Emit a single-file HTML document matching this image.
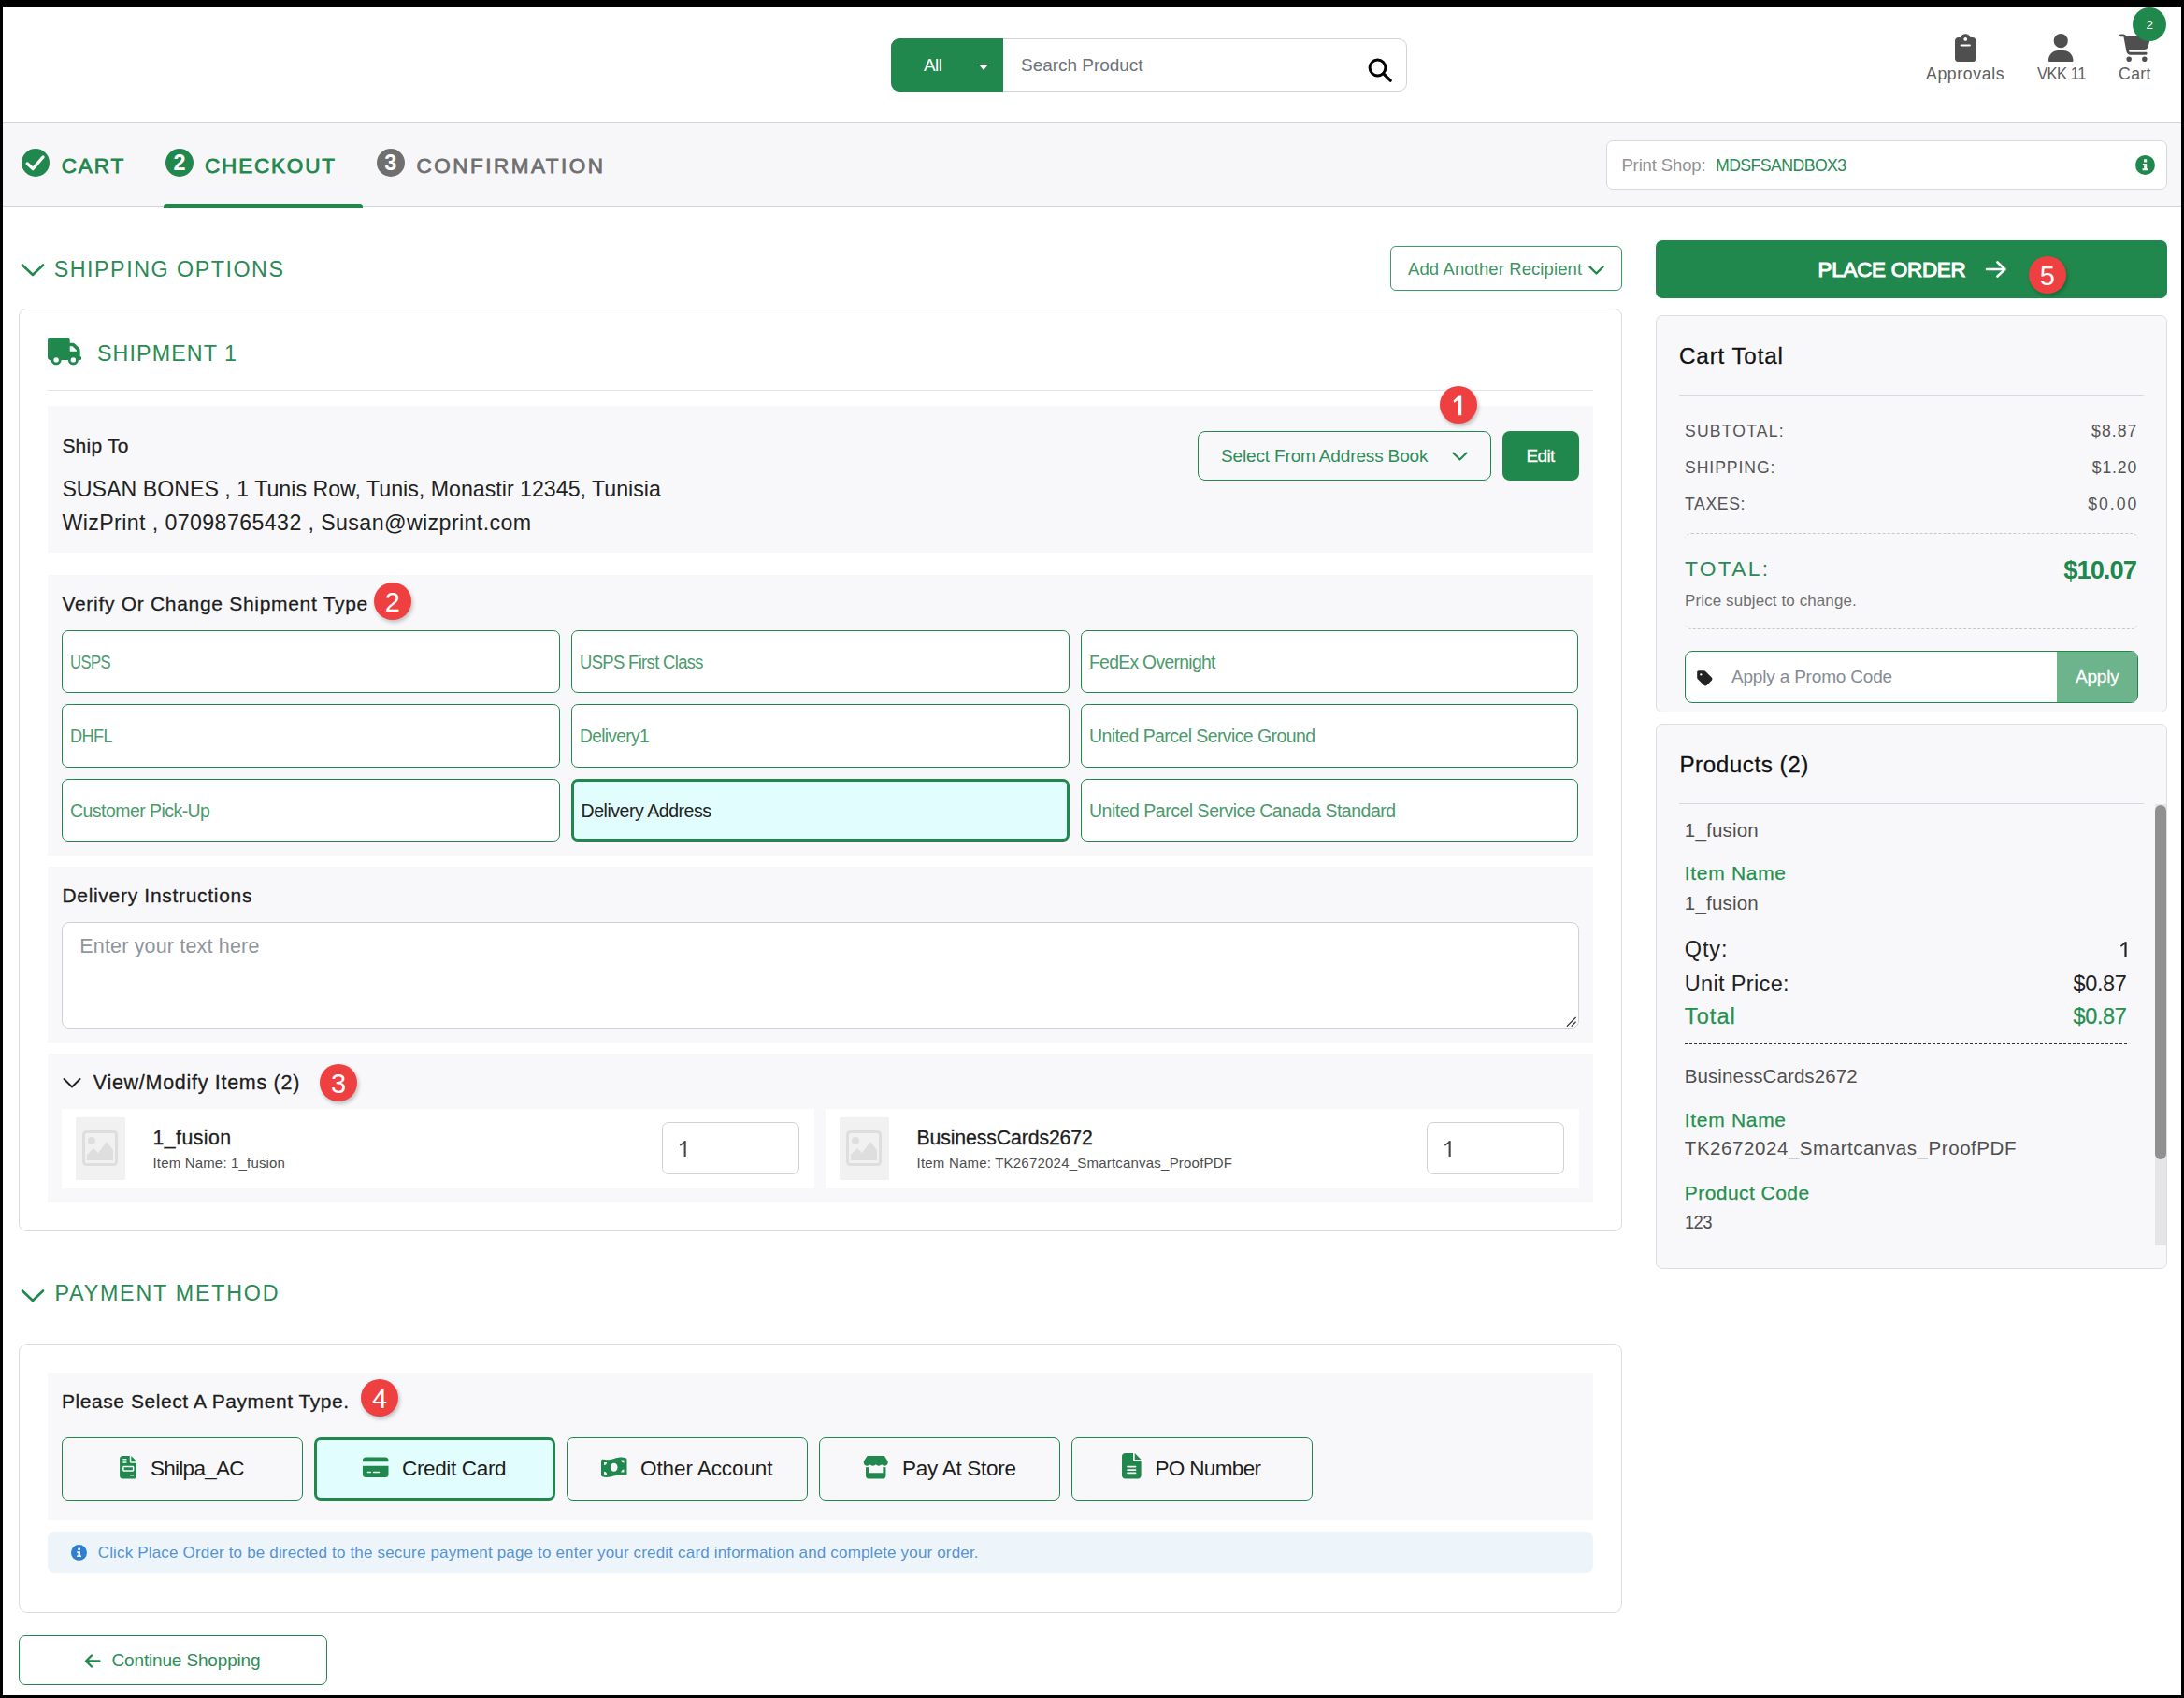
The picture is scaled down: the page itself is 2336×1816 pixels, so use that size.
<!DOCTYPE html>
<html lang="en">
<head>
<meta charset="utf-8">
<title>Checkout</title>
<style>
html,body{margin:0;padding:0;}
body{width:2336px;height:1816px;background:#000;position:relative;overflow:hidden;font-family:"Liberation Sans",sans-serif;}
#page{position:absolute;left:3px;top:7px;width:2330px;height:1806px;background:#fff;overflow:hidden;}
#abs{position:absolute;left:-3px;top:-7px;width:2336px;height:1816px;}
.b{position:absolute;box-sizing:border-box;display:block;}
.t{position:absolute;white-space:nowrap;line-height:1;transform-origin:0 50%;font-family:"Liberation Sans",sans-serif;}
.red{position:absolute;border-radius:50%;background:#ee4041;color:#fff;text-align:center;font-size:29px;box-shadow:1.5px 2.5px 4px rgba(0,0,0,.24);font-family:"Liberation Sans",sans-serif;}
</style>
</head>
<body>
<div id="page"><div id="abs">
<div class="b" style="left:3.0px;top:131.0px;width:2330.0px;height:1.0px;background:#cfd5dc;"></div>
<div class="b" style="left:953.0px;top:41.0px;width:552.0px;height:57.0px;background:#fff;border:1.5px solid #cfd4da;border-radius:9px;"></div>
<div class="b" style="left:953.0px;top:41.0px;width:120.0px;height:57.0px;background:#21884d;border-radius:9px 0 0 9px;"></div>
<span class="t" style="left:988.0px;top:60.4px;font-size:19.0px;color:#fff;letter-spacing:-0.56px;">All</span>
<svg class="b" style="left:1047.0px;top:68.5px;" width="10.0" height="6.0" viewBox="0 0 10 6"><path d="M0 0H10L5 6Z" fill="#fff"/></svg>
<span class="t" style="left:1092.0px;top:60.4px;font-size:19.0px;color:#6d747c;letter-spacing:-0.03px;">Search Product</span>
<svg class="b" style="left:1463.2px;top:62.0px;" width="27.0" height="27.0" viewBox="0 0 27 27"><circle cx="10.500" cy="10.500" r="8.400" fill="none" stroke="#000" stroke-width="3"/><path d="M16.800 16.800L24.200 24.200" stroke="#000" stroke-width="3.300" stroke-linecap="round"/></svg>
<svg class="b" style="left:2091.0px;top:35.5px;" width="22.5" height="30.5" viewBox="0 0 384 512"><path fill="#4f4f4f" d="M192 0c-41.800 0-77.400 26.700-90.500 64H64C28.700 64 0 92.700 0 128V448c0 35.300 28.700 64 64 64H320c35.300 0 64-28.700 64-64V128c0-35.300-28.700-64-64-64H282.500C269.400 26.700 233.800 0 192 0zm0 64a32 32 0 1 1 0 64 32 32 0 1 1 0-64zM112 192H272c8.800 0 16 7.200 16 16s-7.200 16-16 16H112c-8.800 0-16-7.200-16-16s7.200-16 16-16z"/></svg>
<span class="t" style="left:2060.0px;top:71.1px;font-size:17.6px;color:#5e5e5e;letter-spacing:0.66px;">Approvals</span>
<svg class="b" style="left:2191.0px;top:35.5px;" width="26.5" height="30.5" viewBox="0 0 448 512"><path fill="#4f4f4f" d="M224 256A128 128 0 1 0 224 0a128 128 0 1 0 0 256zm-45.700 48C79.800 304 0 383.800 0 482.300C0 498.700 13.300 512 29.700 512H418.300c16.400 0 29.700-13.300 29.700-29.700C448 383.800 368.200 304 269.700 304H178.300z"/></svg>
<span class="t" style="left:2178.5px;top:71.1px;font-size:17.6px;color:#5e5e5e;letter-spacing:-0.62px;transform:scaleX(0.949);">VKK 11</span>
<svg class="b" style="left:2266.5px;top:35.5px;" width="33.3" height="30.5" viewBox="0 0 576 512"><path fill="#4f4f4f" d="M0 24C0 10.700 10.700 0 24 0H69.500c22 0 41.500 12.800 50.600 32h411c26.300 0 45.500 25 38.600 50.400l-41 152.300c-8.500 31.400-37 53.300-69.500 53.300H170.700l5.400 28.500c2.200 11.300 12.100 19.500 23.600 19.500H488c13.300 0 24 10.700 24 24s-10.700 24-24 24H199.700c-34.600 0-64.300-24.600-70.700-58.500L77.400 54.500c-.7-3.800-4-6.500-7.900-6.500H24C10.700 48 0 37.300 0 24zM128 464a48 48 0 1 1 96 0 48 48 0 1 1 -96 0zm336-48a48 48 0 1 1 0 96 48 48 0 1 1 0-96z"/></svg>
<span class="t" style="left:2266.0px;top:71.1px;font-size:17.6px;color:#5e5e5e;letter-spacing:0.42px;">Cart</span>
<div class="b" style="left:2281.0px;top:8.0px;width:36.0px;height:36.0px;background:#21884d;border-radius:18px;"></div>
<span class="t" style="left:2295.5px;top:19.6px;font-size:13.5px;color:#fff;">2</span>
<div class="b" style="left:3.0px;top:132.0px;width:2330.0px;height:88.0px;background:#f7f7f9;"></div>
<div class="b" style="left:3.0px;top:220.0px;width:2330.0px;height:1.0px;background:#cfd5dc;"></div>
<div class="b" style="left:175.0px;top:218.0px;width:213.0px;height:4.0px;background:#21884d;border-radius:3px 3px 0 0;"></div>
<svg class="b" style="left:23.0px;top:159.0px;" width="30.0" height="30.0" viewBox="0 0 30 30"><circle cx="15" cy="15" r="15" fill="#21884d"/><path d="M6.200 16L12.200 21.500L23 9" fill="none" stroke="#fff" stroke-width="3.400" stroke-linecap="round" stroke-linejoin="round"/></svg>
<span class="t" style="left:65.7px;top:167.4px;font-size:22.5px;color:#21884d;-webkit-text-stroke:0.80px #21884d;letter-spacing:1.89px;">CART</span>
<div class="b" style="left:177.2px;top:159.0px;width:30.0px;height:30.0px;background:#21884d;border-radius:15px;"></div>
<span class="t" style="left:185.5px;top:163.1px;font-size:23.5px;color:#fff;font-weight:700;">2</span>
<span class="t" style="left:219.0px;top:167.4px;font-size:22.5px;color:#21884d;-webkit-text-stroke:0.80px #21884d;letter-spacing:1.82px;">CHECKOUT</span>
<div class="b" style="left:402.8px;top:159.0px;width:30.0px;height:30.0px;background:#6f6f6f;border-radius:15px;"></div>
<span class="t" style="left:411.2px;top:163.1px;font-size:23.5px;color:#fff;font-weight:700;">3</span>
<span class="t" style="left:445.5px;top:167.4px;font-size:22.5px;color:#6f6f6f;-webkit-text-stroke:0.80px #6f6f6f;letter-spacing:2.49px;">CONFIRMATION</span>
<div class="b" style="left:1718.0px;top:150.0px;width:600.0px;height:52.5px;background:#fff;border:1.5px solid #d5dae0;border-radius:7px;"></div>
<span class="t" style="left:1734.4px;top:167.6px;font-size:18.5px;color:#939393;letter-spacing:-0.13px;">Print Shop:</span>
<span class="t" style="left:1834.8px;top:167.6px;font-size:18.5px;color:#2b8a55;letter-spacing:-0.65px;transform:scaleX(0.960);">MDSFSANDBOX3</span>
<svg class="b" style="left:2284.0px;top:165.5px;" width="21.0" height="21.0" viewBox="0 0 21 21"><circle cx="10.500" cy="10.500" r="10.500" fill="#21884d"/><rect x="9" y="4.300" width="3.200" height="3.200" rx="0.600" fill="#fff"/><path d="M7.800 9H12.200V14.200H13.600V16.200H7.600V14.200H9.200V11H7.800Z" fill="#fff"/></svg>
<svg class="b" style="left:22.0px;top:280.5px;" width="26.0" height="16.0" viewBox="0 0 26 16"><path d="M2 2.500L13 13L24 2.500" fill="none" stroke="#21884d" stroke-width="2.600" stroke-linecap="round" stroke-linejoin="round"/></svg>
<span class="t" style="left:57.7px;top:276.5px;font-size:23.3px;color:#2b8a55;letter-spacing:1.51px;">SHIPPING OPTIONS</span>
<div class="b" style="left:1487.0px;top:263.3px;width:248.0px;height:47.3px;background:#fff;border:1.5px solid #3d9a68;border-radius:6px;"></div>
<span class="t" style="left:1506.0px;top:279.3px;font-size:18.5px;color:#3f9463;letter-spacing:0.10px;">Add Another Recipient</span>
<svg class="b" style="left:1699.0px;top:283.5px;" width="17.0" height="10.0" viewBox="0 0 17 10"><path d="M1.500 1.500L8.500 8.500L15.500 1.500" fill="none" stroke="#21884d" stroke-width="2.400" stroke-linecap="round" stroke-linejoin="round"/></svg>
<div class="b" style="left:20.0px;top:330.0px;width:1715.0px;height:987.0px;background:#fff;border:1.5px solid #d8dde3;border-radius:8px;"></div>
<svg class="b" style="left:50.8px;top:361.3px;" width="36.5" height="29.5" viewBox="0 0 640 512"><path fill="#21884d" d="M48 0C21.500 0 0 21.500 0 48V368c0 26.500 21.500 48 48 48H64c0 53 43 96 96 96s96-43 96-96H384c0 53 43 96 96 96s96-43 96-96h32c17.700 0 32-14.300 32-32s-14.300-32-32-32V288 256 237.300c0-17-6.700-33.300-18.700-45.300L512 114.700c-12-12-28.300-18.700-45.300-18.700H416V48c0-26.500-21.500-48-48-48H48zM416 160h50.700L544 237.300V256H416V160zM112 416a48 48 0 1 1 96 0 48 48 0 1 1 -96 0zm368-48a48 48 0 1 1 0 96 48 48 0 1 1 0-96z"/></svg>
<span class="t" style="left:104.0px;top:367.3px;font-size:23.3px;color:#2b8a55;letter-spacing:1.07px;">SHIPMENT 1</span>
<div class="b" style="left:51.0px;top:417.0px;width:1653.0px;height:1.0px;background:#e2e3e5;"></div>
<div class="b" style="left:51.0px;top:434.0px;width:1653.0px;height:157.0px;background:#f8f8fa;"></div>
<span class="t" style="left:66.4px;top:465.9px;font-size:21.0px;color:#1d1d1d;-webkit-text-stroke:0.28px #1d1d1d;letter-spacing:0.22px;">Ship To</span>
<span class="t" style="left:66.4px;top:511.8px;font-size:23.2px;color:#222;">SUSAN BONES , 1 Tunis Row, Tunis, Monastir 12345, Tunisia</span>
<span class="t" style="left:66.4px;top:548.0px;font-size:23.2px;color:#222;letter-spacing:0.40px;">WizPrint , 07098765432 , Susan@wizprint.com</span>
<div class="b" style="left:1281.0px;top:461.0px;width:314.0px;height:53.0px;border:1.5px solid #21884d;border-radius:8px;"></div>
<span class="t" style="left:1306.0px;top:477.9px;font-size:19.0px;color:#2f8d58;letter-spacing:-0.15px;">Select From Address Book</span>
<svg class="b" style="left:1552.5px;top:483.3px;" width="17.0" height="10.5" viewBox="0 0 18 11"><path d="M1.500 1.500L9 9L16.500 1.500" fill="none" stroke="#21884d" stroke-width="2.100" stroke-linecap="round" stroke-linejoin="round"/></svg>
<div class="b" style="left:1607.0px;top:461.0px;width:82.0px;height:53.0px;background:#21884d;border-radius:8px;"></div>
<span class="t" style="left:1632.4px;top:478.2px;font-size:19.0px;color:#fff;-webkit-text-stroke:0.28px #fff;letter-spacing:-0.58px;">Edit</span>
<div class="red" style="left:1539.8px;top:413.0px;width:40px;height:40px;line-height:42px;"><svg width="40" height="40" viewBox="-20 -20 40 40" style="display:block"><path d="M0.800 -10.450H3.200V11.200H-0.100V-5.600L-4.600 -1.900L-5.400 -4.500Z" fill="#fff"/></svg></div>
<div class="b" style="left:51.0px;top:615.0px;width:1653.0px;height:300.0px;background:#f8f8fa;"></div>
<span class="t" style="left:66.4px;top:635.4px;font-size:21.0px;color:#1d1d1d;-webkit-text-stroke:0.28px #1d1d1d;letter-spacing:0.70px;">Verify Or Change Shipment Type</span>
<div class="red" style="left:399.8px;top:623.3px;width:40px;height:40px;line-height:42px;">2</div>
<div class="b" style="left:66.0px;top:674.0px;width:533.0px;height:67.0px;background:#fff;border:1.5px solid #21884d;border-radius:7px;"></div>
<span class="t" style="left:75.0px;top:698.5px;font-size:19.5px;color:#4c9a6d;letter-spacing:-0.68px;transform:scaleX(0.852);">USPS</span>
<div class="b" style="left:611.0px;top:674.0px;width:533.0px;height:67.0px;background:#fff;border:1.5px solid #21884d;border-radius:7px;"></div>
<span class="t" style="left:620.0px;top:698.5px;font-size:19.5px;color:#4c9a6d;letter-spacing:-0.68px;transform:scaleX(0.944);">USPS First Class</span>
<div class="b" style="left:1156.0px;top:674.0px;width:532.0px;height:67.0px;background:#fff;border:1.5px solid #21884d;border-radius:7px;"></div>
<span class="t" style="left:1165.0px;top:698.5px;font-size:19.5px;color:#4c9a6d;letter-spacing:-0.68px;transform:scaleX(0.990);">FedEx Overnight</span>
<div class="b" style="left:66.0px;top:753.0px;width:533.0px;height:68.0px;background:#fff;border:1.5px solid #21884d;border-radius:7px;"></div>
<span class="t" style="left:75.0px;top:778.0px;font-size:19.5px;color:#4c9a6d;letter-spacing:-0.68px;transform:scaleX(0.931);">DHFL</span>
<div class="b" style="left:611.0px;top:753.0px;width:533.0px;height:68.0px;background:#fff;border:1.5px solid #21884d;border-radius:7px;"></div>
<span class="t" style="left:620.0px;top:778.0px;font-size:19.5px;color:#4c9a6d;letter-spacing:-0.68px;transform:scaleX(0.983);">Delivery1</span>
<div class="b" style="left:1156.0px;top:753.0px;width:532.0px;height:68.0px;background:#fff;border:1.5px solid #21884d;border-radius:7px;"></div>
<span class="t" style="left:1165.0px;top:778.0px;font-size:19.5px;color:#4c9a6d;letter-spacing:-0.59px;">United Parcel Service Ground</span>
<div class="b" style="left:66.0px;top:833.0px;width:533.0px;height:67.0px;background:#fff;border:1.5px solid #21884d;border-radius:7px;"></div>
<span class="t" style="left:75.0px;top:857.5px;font-size:19.5px;color:#4c9a6d;letter-spacing:-0.55px;">Customer Pick-Up</span>
<div class="b" style="left:611.0px;top:833.0px;width:533.0px;height:67.0px;background:#e1fdfd;border:3.5px solid #21884d;border-radius:7px;"></div>
<span class="t" style="left:621.5px;top:857.5px;font-size:19.5px;color:#222;letter-spacing:-0.45px;">Delivery Address</span>
<div class="b" style="left:1156.0px;top:833.0px;width:532.0px;height:67.0px;background:#fff;border:1.5px solid #21884d;border-radius:7px;"></div>
<span class="t" style="left:1165.0px;top:857.5px;font-size:19.5px;color:#4c9a6d;letter-spacing:-0.49px;">United Parcel Service Canada Standard</span>
<div class="b" style="left:51.0px;top:927.0px;width:1653.0px;height:188.0px;background:#f8f8fa;"></div>
<span class="t" style="left:66.4px;top:947.2px;font-size:21.0px;color:#1d1d1d;-webkit-text-stroke:0.28px #1d1d1d;letter-spacing:0.70px;">Delivery Instructions</span>
<div class="b" style="left:66.0px;top:986.0px;width:1623.0px;height:114.0px;background:#fff;border:1.5px solid #cdd2d9;border-radius:8px;"></div>
<span class="t" style="left:85.3px;top:1002.0px;font-size:21.5px;color:#90959d;letter-spacing:0.17px;">Enter your text here</span>
<svg class="b" style="left:1674.5px;top:1086.5px;" width="11.5" height="11.5" viewBox="0 0 13 13"><path d="M1 12L12 1M6.500 12L12 6.500" stroke="#333" stroke-width="1.500" fill="none"/></svg>
<div class="b" style="left:51.0px;top:1127.0px;width:1653.0px;height:159.0px;background:#f8f8fa;"></div>
<svg class="b" style="left:67.0px;top:1152.0px;" width="20.0" height="13.0" viewBox="0 0 20 13"><path d="M1.500 2L10 10.500L18.500 2" fill="none" stroke="#222" stroke-width="2" stroke-linecap="round" stroke-linejoin="round"/></svg>
<span class="t" style="left:99.8px;top:1147.6px;font-size:21.5px;color:#1d1d1d;-webkit-text-stroke:0.28px #1d1d1d;letter-spacing:0.71px;">View/Modify Items (2)</span>
<div class="red" style="left:342.0px;top:1138.0px;width:40px;height:40px;line-height:42px;">3</div>
<div class="b" style="left:66.0px;top:1186.0px;width:805.0px;height:85.0px;background:#fff;"></div>
<div class="b" style="left:81.0px;top:1195.0px;width:53.0px;height:67.0px;background:#f1f1f1;"></div>
<svg class="b" style="left:86.8px;top:1207.8px;" width="40.0" height="40.0" viewBox="0 0 40 40"><rect x="2.500" y="2.500" width="35" height="35" rx="3" fill="none" stroke="#dedede" stroke-width="3"/><circle cx="11" cy="12" r="4" fill="#dedede"/><path d="M6 33V27L13 20L18 25L27 13L34 22V33Z" fill="#dedede"/></svg>
<span class="t" style="left:163.5px;top:1206.6px;font-size:21.3px;color:#1d1d1d;-webkit-text-stroke:0.28px #1d1d1d;letter-spacing:0.43px;">1_fusion</span>
<span class="t" style="left:163.5px;top:1235.6px;font-size:15.0px;color:#4d4d4d;letter-spacing:0.17px;">Item Name: 1_fusion</span>
<div class="b" style="left:707.6px;top:1200.2px;width:147.9px;height:55.6px;background:#fff;border:1.5px solid #cdd2d9;border-radius:7px;"></div>
<svg class="b" style="left:727.2px;top:1219.8px;" width="6.7" height="17.4" viewBox="0 0 6.70 17.40"><path d="M5.65 0.30V17.40" fill="none" stroke="#444" stroke-width="2.10"/><path d="M0.94 4.70L5.55 1.04" fill="none" stroke="#444" stroke-width="1.68" stroke-linecap="round"/></svg>
<div class="b" style="left:883.0px;top:1186.0px;width:806.0px;height:85.0px;background:#fff;"></div>
<div class="b" style="left:898.0px;top:1195.0px;width:53.0px;height:67.0px;background:#f1f1f1;"></div>
<svg class="b" style="left:903.8px;top:1207.8px;" width="40.0" height="40.0" viewBox="0 0 40 40"><rect x="2.500" y="2.500" width="35" height="35" rx="3" fill="none" stroke="#dedede" stroke-width="3"/><circle cx="11" cy="12" r="4" fill="#dedede"/><path d="M6 33V27L13 20L18 25L27 13L34 22V33Z" fill="#dedede"/></svg>
<span class="t" style="left:980.5px;top:1206.6px;font-size:21.3px;color:#1d1d1d;-webkit-text-stroke:0.28px #1d1d1d;letter-spacing:-0.14px;">BusinessCards2672</span>
<span class="t" style="left:980.5px;top:1235.6px;font-size:15.0px;color:#4d4d4d;letter-spacing:0.21px;">Item Name: TK2672024_Smartcanvas_ProofPDF</span>
<div class="b" style="left:1525.6px;top:1200.2px;width:147.9px;height:55.6px;background:#fff;border:1.5px solid #cdd2d9;border-radius:7px;"></div>
<svg class="b" style="left:1545.2px;top:1219.8px;" width="6.7" height="17.4" viewBox="0 0 6.70 17.40"><path d="M5.65 0.30V17.40" fill="none" stroke="#444" stroke-width="2.10"/><path d="M0.94 4.70L5.55 1.04" fill="none" stroke="#444" stroke-width="1.68" stroke-linecap="round"/></svg>
<svg class="b" style="left:22.0px;top:1377.5px;" width="26.0" height="16.0" viewBox="0 0 26 16"><path d="M2 2.500L13 13L24 2.500" fill="none" stroke="#21884d" stroke-width="2.600" stroke-linecap="round" stroke-linejoin="round"/></svg>
<span class="t" style="left:58.5px;top:1372.2px;font-size:23.3px;color:#2b8a55;letter-spacing:1.76px;">PAYMENT METHOD</span>
<div class="b" style="left:20.0px;top:1437.0px;width:1715.0px;height:287.5px;background:#fff;border:1.5px solid #d8dde3;border-radius:9px;"></div>
<div class="b" style="left:51.0px;top:1468.0px;width:1653.0px;height:158.0px;background:#f8f8fa;"></div>
<span class="t" style="left:66.0px;top:1488.2px;font-size:21.0px;color:#1d1d1d;-webkit-text-stroke:0.28px #1d1d1d;letter-spacing:0.56px;">Please Select A Payment Type.</span>
<div class="red" style="left:386.0px;top:1475.4px;width:40px;height:40px;line-height:42px;">4</div>
<div class="b" style="left:66.0px;top:1537.0px;width:258.0px;height:67.7px;border:1.5px solid #21884d;border-radius:7px;"></div>
<svg class="b" style="left:127.5px;top:1557.0px;" width="18.5" height="24.5" viewBox="0 0 384 512"><path fill="#21884d" d="M64 0C28.700 0 0 28.700 0 64V448c0 35.300 28.700 64 64 64H320c35.300 0 64-28.700 64-64V160H256c-17.700 0-32-14.300-32-32V0H64zM256 0V128H384L256 0zM80 64h64c8.800 0 16 7.200 16 16s-7.200 16-16 16H80c-8.800 0-16-7.200-16-16s7.200-16 16-16zm0 64h64c8.800 0 16 7.200 16 16s-7.200 16-16 16H80c-8.800 0-16-7.200-16-16s7.200-16 16-16zm16 96H288c17.700 0 32 14.300 32 32v64c0 17.700-14.300 32-32 32H96c-17.700 0-32-14.300-32-32V256c0-17.700 14.300-32 32-32zm0 32v64H288V256H96zM240 416h64c8.800 0 16 7.200 16 16s-7.200 16-16 16H240c-8.800 0-16-7.200-16-16s7.200-16 16-16z"/></svg>
<span class="t" style="left:161.0px;top:1559.5px;font-size:22.5px;color:#1d1d1d;letter-spacing:-0.73px;">Shilpa_AC</span>
<div class="b" style="left:336.0px;top:1537.0px;width:258.0px;height:67.7px;background:#e1fdfd;border:3.5px solid #21884d;border-radius:7px;"></div>
<svg class="b" style="left:388.0px;top:1557.0px;" width="27.5" height="24.5" viewBox="0 0 576 512"><path fill="#21884d" d="M64 32C28.700 32 0 60.700 0 96v32H576V96c0-35.300-28.700-64-64-64H64zM576 224H0V416c0 35.300 28.700 64 64 64H512c35.300 0 64-28.700 64-64V224zM112 352h64c8.800 0 16 7.200 16 16s-7.200 16-16 16H112c-8.800 0-16-7.200-16-16s7.200-16 16-16zm112 16c0-8.800 7.200-16 16-16H368c8.800 0 16 7.200 16 16s-7.200 16-16 16H240c-8.800 0-16-7.200-16-16z"/></svg>
<span class="t" style="left:430.0px;top:1559.5px;font-size:22.5px;color:#1d1d1d;letter-spacing:-0.35px;">Credit Card</span>
<div class="b" style="left:606.0px;top:1537.0px;width:258.0px;height:67.7px;border:1.5px solid #21884d;border-radius:7px;"></div>
<svg class="b" style="left:643.0px;top:1557.0px;" width="27.5" height="24.5" viewBox="0 0 576 512"><path fill="#21884d" d="M0 112.500V422.300c0 18 10.100 35 27 41.300c87 32.500 174 10.300 261-11.900c79.800-20.300 159.600-40.700 239.300-18.900c23 6.300 48.700-9.500 48.700-33.400V89.700c0-18-10.100-35-27-41.300C462 15.900 375 38.100 288 60.300C208.200 80.600 128.400 100.900 48.700 79.100C25.600 72.800 0 88.600 0 112.500zM288 352c-44.200 0-80-43-80-96s35.800-96 80-96s80 43 80 96s-35.800 96-80 96zM64 352c35.300 0 64 28.700 64 64H64V352zm64-208c0 35.300-28.700 64-64 64V144h64zM512 304v64H448c0-35.300 28.700-64 64-64zM448 96h64v64c-35.300 0-64-28.700-64-64z"/></svg>
<span class="t" style="left:685.0px;top:1559.5px;font-size:22.5px;color:#1d1d1d;letter-spacing:-0.09px;">Other Account</span>
<div class="b" style="left:876.0px;top:1537.0px;width:258.0px;height:67.7px;border:1.5px solid #21884d;border-radius:7px;"></div>
<svg class="b" style="left:923.0px;top:1557.0px;" width="27.5" height="24.5" viewBox="0 0 576 512"><path fill="#21884d" d="M547.600 103.800L490.300 13.100C485.200 5 476.100 0 466.400 0H109.600C99.900 0 90.800 5 85.700 13.100L28.300 103.800c-29.600 46.800-3.400 111.900 51.900 119.400c4 .5 8.100 .8 12.100 .8c26.100 0 49.300-11.400 65.200-29c15.900 17.600 39.100 29 65.200 29c26.100 0 49.300-11.400 65.200-29c15.900 17.600 39.100 29 65.200 29c26.200 0 49.300-11.400 65.200-29c16 17.600 39.100 29 65.200 29c4.100 0 8.100-.3 12.100-.8c55.500-7.400 81.800-72.500 52.100-119.400zM499.700 254.900l-.1 0c-5.300 .7-10.700 1.100-16.200 1.100c-12.400 0-24.300-1.900-35.400-5.300V384H128V250.600c-11.200 3.500-23.200 5.400-35.600 5.400c-5.500 0-11-.4-16.300-1.100l-.1 0c-4.100-.6-8.100-1.300-12-2.300V384v64c0 35.300 28.700 64 64 64H448c35.300 0 64-28.700 64-64V384 252.600c-4 1-8 1.800-12.300 2.300z"/></svg>
<span class="t" style="left:965.0px;top:1559.5px;font-size:22.5px;color:#1d1d1d;letter-spacing:-0.28px;">Pay At Store</span>
<div class="b" style="left:1146.0px;top:1537.0px;width:258.0px;height:67.7px;border:1.5px solid #21884d;border-radius:7px;"></div>
<svg class="b" style="left:1200.0px;top:1554.3px;" width="20.6" height="27.5" viewBox="0 0 384 512"><path fill="#21884d" d="M64 0C28.700 0 0 28.700 0 64V448c0 35.300 28.700 64 64 64H320c35.300 0 64-28.700 64-64V160H256c-17.700 0-32-14.300-32-32V0H64zM256 0V128H384L256 0zM112 256H272c8.800 0 16 7.200 16 16s-7.200 16-16 16H112c-8.800 0-16-7.200-16-16s7.200-16 16-16zm0 64H272c8.800 0 16 7.200 16 16s-7.200 16-16 16H112c-8.800 0-16-7.200-16-16s7.200-16 16-16zm0 64H272c8.800 0 16 7.200 16 16s-7.200 16-16 16H112c-8.800 0-16-7.200-16-16s7.200-16 16-16z"/></svg>
<span class="t" style="left:1235.5px;top:1559.5px;font-size:22.5px;color:#1d1d1d;letter-spacing:-0.66px;">PO Number</span>
<div class="b" style="left:51.0px;top:1638.0px;width:1653.0px;height:44.0px;background:#edf5fa;border-radius:7px;"></div>
<svg class="b" style="left:76.0px;top:1651.5px;" width="17.0" height="17.0" viewBox="0 0 21 21"><circle cx="10.500" cy="10.500" r="10.500" fill="#2f7fd1"/><rect x="9" y="4.300" width="3.200" height="3.200" rx="0.600" fill="#fff"/><path d="M7.800 9H12.200V14.200H13.600V16.200H7.600V14.200H9.200V11H7.800Z" fill="#fff"/></svg>
<span class="t" style="left:104.7px;top:1651.6px;font-size:17.0px;color:#5693d3;letter-spacing:0.17px;">Click Place Order to be directed to the secure payment page to enter your credit card information and complete your order.</span>
<div class="b" style="left:20.0px;top:1749.0px;width:330.0px;height:53.0px;background:#fff;border:1.5px solid #21884d;border-radius:7px;"></div>
<svg class="b" style="left:90.0px;top:1768.5px;" width="18.0" height="15.0" viewBox="0 0 18 15"><path d="M8 1.500L2 7.500L8 13.500M2.500 7.500H16.500" fill="none" stroke="#21884d" stroke-width="2.300" stroke-linecap="round" stroke-linejoin="round"/></svg>
<span class="t" style="left:119.5px;top:1766.4px;font-size:19.0px;color:#2f8d58;letter-spacing:-0.16px;">Continue Shopping</span>
<div class="b" style="left:1771.0px;top:257.0px;width:547.0px;height:62.0px;background:#21884d;border-radius:7px;"></div>
<span class="t" style="left:1944.5px;top:278.4px;font-size:22.4px;color:#fff;-webkit-text-stroke:1.05px #fff;letter-spacing:-0.23px;">PLACE ORDER</span>
<svg class="b" style="left:2123.0px;top:279.0px;" width="24.0" height="18.0" viewBox="0 0 24 18"><path d="M2 9H21M13.500 1.500L21.500 9L13.500 16.500" fill="none" stroke="#fff" stroke-width="2.600" stroke-linecap="round" stroke-linejoin="round"/></svg>
<div class="red" style="left:2169.8px;top:274.0px;width:40px;height:40px;line-height:42px;">5</div>
<div class="b" style="left:1771.0px;top:337.0px;width:547.0px;height:425.0px;background:#f8f8fa;border:1.5px solid #dbdee3;border-radius:7px;"></div>
<span class="t" style="left:1796.0px;top:368.6px;font-size:24.2px;color:#111;-webkit-text-stroke:0.28px #111;letter-spacing:0.88px;">Cart Total</span>
<div class="b" style="left:1796.0px;top:422.0px;width:497.0px;height:1.0px;background:#d6dade;"></div>
<span class="t" style="left:1802.0px;top:453.0px;font-size:17.6px;color:#555;letter-spacing:1.19px;">SUBTOTAL:</span>
<span class="t" style="left:2237.1px;top:453.0px;font-size:17.6px;color:#555;letter-spacing:1.04px;">$8.87</span>
<span class="t" style="left:1802.0px;top:491.7px;font-size:17.6px;color:#555;letter-spacing:0.94px;">SHIPPING:</span>
<span class="t" style="left:2237.8px;top:491.7px;font-size:17.6px;color:#555;letter-spacing:0.87px;">$1.20</span>
<span class="t" style="left:1802.0px;top:530.7px;font-size:17.6px;color:#555;letter-spacing:0.64px;">TAXES:</span>
<span class="t" style="left:2233.3px;top:530.7px;font-size:17.6px;color:#555;letter-spacing:1.99px;">$0.00</span>
<div class="b" style="left:1802.0px;top:570.0px;width:485.0px;height:103.0px;border:0;border-radius:7px;border-top:1.5px dashed #c4c7cc;border-bottom:1.5px dashed #c4c7cc;"></div>
<span class="t" style="left:1802.0px;top:597.2px;font-size:22.8px;color:#2b8a55;letter-spacing:2.26px;">TOTAL:</span>
<span class="t" style="left:2207.2px;top:595.9px;font-size:27.3px;color:#21884d;font-weight:700;letter-spacing:-0.96px;">$10.07</span>
<span class="t" style="left:1802.0px;top:633.6px;font-size:17.0px;color:#6f6f6f;letter-spacing:0.10px;">Price subject to change.</span>
<div class="b" style="left:1802.0px;top:696.0px;width:485.0px;height:56.0px;background:#fff;border:1.5px solid #21884d;border-radius:8px;"></div>
<div class="b" style="left:2200.0px;top:697.2px;width:85.8px;height:53.6px;background:#6db38b;border-radius:0 6px 6px 0;"></div>
<svg class="b" style="left:1814.0px;top:715.5px;" width="19.0" height="19.0" viewBox="0 0 448 512"><path fill="#222" d="M0 80V229.500c0 17 6.700 33.300 18.700 45.300l176 176c25 25 65.500 25 90.500 0L418.700 317.300c25-25 25-65.500 0-90.500l-176-176c-12-12-28.300-18.700-45.300-18.700H48C21.500 32 0 53.500 0 80zm112 32a32 32 0 1 1 0 64 32 32 0 1 1 0-64z"/></svg>
<span class="t" style="left:1852.0px;top:713.9px;font-size:19.0px;color:#858c94;letter-spacing:-0.19px;">Apply a Promo Code</span>
<span class="t" style="left:2220.0px;top:713.9px;font-size:19.0px;color:#fff;-webkit-text-stroke:0.28px #fff;letter-spacing:-0.21px;">Apply</span>
<div class="b" style="left:1771.0px;top:774.0px;width:547.0px;height:582.5px;background:#f8f8fa;border:1.5px solid #dbdee3;border-radius:7px;"></div>
<span class="t" style="left:1796.4px;top:806.1px;font-size:24.2px;color:#111;-webkit-text-stroke:0.28px #111;letter-spacing:0.56px;">Products (2)</span>
<div class="b" style="left:1796.0px;top:859.0px;width:497.0px;height:1.0px;background:#d6dade;"></div>
<div class="b" style="left:2305.0px;top:860.0px;width:12.0px;height:471.5px;background:#e5e5e7;"></div>
<div class="b" style="left:2305.0px;top:860.5px;width:12.0px;height:379.5px;background:#909090;border-radius:6px;"></div>
<span class="t" style="left:1801.8px;top:877.7px;font-size:20.5px;color:#4f4f4f;letter-spacing:0.21px;">1_fusion</span>
<span class="t" style="left:1801.8px;top:922.9px;font-size:21.0px;color:#26904f;-webkit-text-stroke:0.25px #26904f;letter-spacing:0.69px;">Item Name</span>
<span class="t" style="left:1801.8px;top:955.5px;font-size:20.5px;color:#4f4f4f;letter-spacing:0.21px;">1_fusion</span>
<span class="t" style="left:1801.8px;top:1004.3px;font-size:23.5px;color:#222;letter-spacing:0.87px;">Qty:</span>
<svg class="b" style="left:2268.0px;top:1007.0px;" width="6.6" height="17.2" viewBox="0 0 6.62 17.20"><path d="M5.52 0.30V17.20" fill="none" stroke="#222" stroke-width="2.20"/><path d="M0.98 4.64L5.42 1.08" fill="none" stroke="#222" stroke-width="1.76" stroke-linecap="round"/></svg>
<span class="t" style="left:1801.8px;top:1040.5px;font-size:23.5px;color:#222;letter-spacing:0.34px;">Unit Price:</span>
<span class="t" style="left:2217.5px;top:1040.5px;font-size:23.5px;color:#222;letter-spacing:-0.38px;">$0.87</span>
<span class="t" style="left:1801.8px;top:1076.0px;font-size:23.5px;color:#26904f;-webkit-text-stroke:0.25px #26904f;letter-spacing:1.09px;">Total</span>
<span class="t" style="left:2217.5px;top:1076.0px;font-size:23.5px;color:#26904f;-webkit-text-stroke:0.25px #26904f;letter-spacing:-0.38px;">$0.87</span>
<div class="b" style="left:1802.0px;top:1115.5px;width:473.0px;height:1.5px;border-top:1.5px dashed #333;"></div>
<span class="t" style="left:1801.8px;top:1140.6px;font-size:20.5px;color:#4f4f4f;letter-spacing:0.08px;">BusinessCards2672</span>
<span class="t" style="left:1801.8px;top:1186.9px;font-size:21.0px;color:#26904f;-webkit-text-stroke:0.25px #26904f;letter-spacing:0.69px;">Item Name</span>
<span class="t" style="left:1801.8px;top:1218.3px;font-size:20.5px;color:#4f4f4f;letter-spacing:0.56px;">TK2672024_Smartcanvas_ProofPDF</span>
<span class="t" style="left:1801.8px;top:1265.0px;font-size:21.0px;color:#26904f;-webkit-text-stroke:0.25px #26904f;letter-spacing:0.45px;">Product Code</span>
<span class="t" style="left:1801.8px;top:1296.5px;font-size:20.5px;color:#4f4f4f;letter-spacing:-0.72px;transform:scaleX(0.900);">123</span>
</div></div>
</body>
</html>
